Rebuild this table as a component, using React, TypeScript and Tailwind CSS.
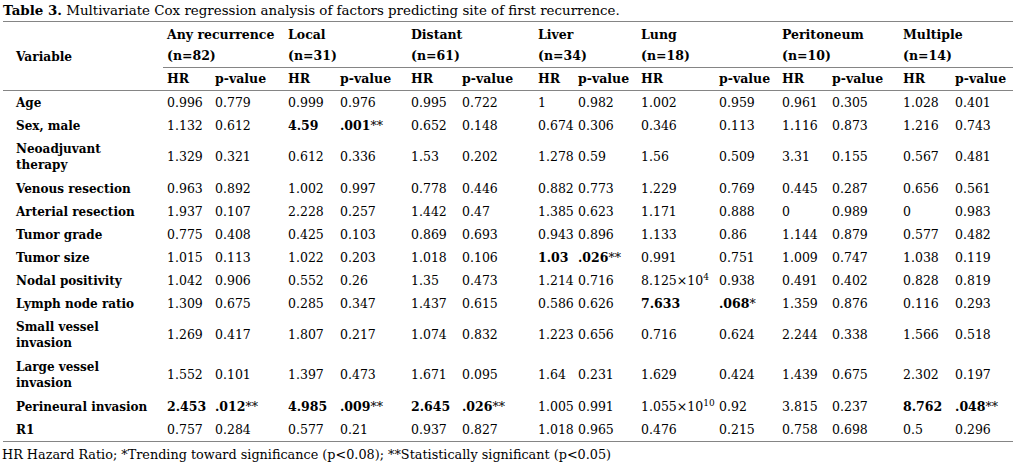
import React from "react";

type Cell = { v: React.ReactNode; b?: boolean };

const c = (v: React.ReactNode, b = false): Cell => ({ v, b });

const rows: { label: React.ReactNode; tall?: boolean; cells: Cell[] }[] = [
  { label: "Age", cells: ["0.996", "0.779", "0.999", "0.976", "0.995", "0.722", "1", "0.982", "1.002", "0.959", "0.961", "0.305", "1.028", "0.401"].map((x) => c(x)) },
  {
    label: "Sex, male",
    cells: [c("1.132"), c("0.612"), c("4.59", true), c(<><b>.001</b>**</>), c("0.652"), c("0.148"), c("0.674"), c("0.306"), c("0.346"), c("0.113"), c("1.116"), c("0.873"), c("1.216"), c("0.743")],
  },
  { label: <>Neoadjuvant<br />therapy</>, tall: true, cells: ["1.329", "0.321", "0.612", "0.336", "1.53", "0.202", "1.278", "0.59", "1.56", "0.509", "3.31", "0.155", "0.567", "0.481"].map((x) => c(x)) },
  { label: "Venous resection", cells: ["0.963", "0.892", "1.002", "0.997", "0.778", "0.446", "0.882", "0.773", "1.229", "0.769", "0.445", "0.287", "0.656", "0.561"].map((x) => c(x)) },
  { label: "Arterial resection", cells: ["1.937", "0.107", "2.228", "0.257", "1.442", "0.47", "1.385", "0.623", "1.171", "0.888", "0", "0.989", "0", "0.983"].map((x) => c(x)) },
  { label: "Tumor grade", cells: ["0.775", "0.408", "0.425", "0.103", "0.869", "0.693", "0.943", "0.896", "1.133", "0.86", "1.144", "0.879", "0.577", "0.482"].map((x) => c(x)) },
  {
    label: "Tumor size",
    cells: [c("1.015"), c("0.113"), c("1.022"), c("0.203"), c("1.018"), c("0.106"), c("1.03", true), c(<><b>.026</b>**</>), c("0.991"), c("0.751"), c("1.009"), c("0.747"), c("1.038"), c("0.119")],
  },
  {
    label: "Nodal positivity",
    cells: [c("1.042"), c("0.906"), c("0.552"), c("0.26"), c("1.35"), c("0.473"), c("1.214"), c("0.716"), c(<>8.125×10<sup className="text-[9px]">4</sup></>), c("0.938"), c("0.491"), c("0.402"), c("0.828"), c("0.819")],
  },
  {
    label: "Lymph node ratio",
    cells: [c("1.309"), c("0.675"), c("0.285"), c("0.347"), c("1.437"), c("0.615"), c("0.586"), c("0.626"), c("7.633", true), c(<><b>.068</b>*</>), c("1.359"), c("0.876"), c("0.116"), c("0.293")],
  },
  { label: <>Small vessel<br />invasion</>, tall: true, cells: ["1.269", "0.417", "1.807", "0.217", "1.074", "0.832", "1.223", "0.656", "0.716", "0.624", "2.244", "0.338", "1.566", "0.518"].map((x) => c(x)) },
  { label: <>Large vessel<br />invasion</>, tall: true, cells: ["1.552", "0.101", "1.397", "0.473", "1.671", "0.095", "1.64", "0.231", "1.629", "0.424", "1.439", "0.675", "2.302", "0.197"].map((x) => c(x)) },
  {
    label: "Perineural invasion",
    cells: [c("2.453", true), c(<><b>.012</b>**</>), c("4.985", true), c(<><b>.009</b>**</>), c("2.645", true), c(<><b>.026</b>**</>), c("1.005"), c("0.991"), c(<>1.055×10<sup className="text-[9px]">10</sup></>), c("0.92"), c("3.815"), c("0.237"), c("8.762", true), c(<><b>.048</b>**</>)],
  },
  { label: "R1", cells: ["0.757", "0.284", "0.577", "0.21", "0.937", "0.827", "1.018", "0.965", "0.476", "0.215", "0.758", "0.698", "0.5", "0.296"].map((x) => c(x)) },
];

const groups = [
  ["Any recurrence", "(n=82)"],
  ["Local", "(n=31)"],
  ["Distant", "(n=61)"],
  ["Liver", "(n=34)"],
  ["Lung", "(n=18)"],
  ["Peritoneum", "(n=10)"],
  ["Multiple", "(n=14)"],
];

const widths = [160, 48, 73, 52, 71, 51, 76, 40, 63, 78, 63, 50, 71, 52, 62];

export default function App() {
  return (
    <div className="w-[1035px] h-[471px] bg-white text-black text-[12.5px] leading-[16px] pt-[2px]" style={{ fontFamily: '"DejaVu Serif", serif' }}>
      {/* caption */}
      <p className="pl-[3px] text-[13.4px]">
        <b>Table 3.</b> Multivariate Cox regression analysis of factors predicting site of first recurrence.
      </p>

      <table className="ml-[3px] mt-[2px] w-[1010px] table-fixed border-collapse border-t border-[#858585]">
        <colgroup>
          {widths.map((w, i) => (
            <col key={i} style={{ width: w }} />
          ))}
        </colgroup>
        <thead className="font-bold">
          <tr>
            <th rowSpan={2} className="pl-[13px] pb-[3px] text-left align-bottom font-bold text-[12.2px]">Variable</th>
            {groups.map(([name]) => (
              <th key={name} colSpan={2} className="pl-1 pt-[5px] pb-[2px] text-left whitespace-nowrap">{name}</th>
            ))}
          </tr>
          <tr>
            {groups.map(([name, n]) => (
              <th key={name} colSpan={2} className="pl-1 py-[3px] text-left border-b border-[#858585]">{n}</th>
            ))}
          </tr>
          <tr className="border-b border-[#858585]">
            <th />
            {groups.map(([name]) => (
              <React.Fragment key={name}>
                <th className="pl-1 py-[3px] text-left">HR</th>
                <th className="pl-1 py-[3px] text-left whitespace-nowrap">p-value</th>
              </React.Fragment>
            ))}
          </tr>
        </thead>
        <tbody className="border-b border-[#858585]">
          {rows.map((r, i) => (
            <tr key={i}>
              <td className={`pl-[13px] font-bold whitespace-nowrap text-[12px] ${r.tall ? "py-[4px]" : "py-[3.5px]"}`}>{r.label}</td>
              {r.cells.map((cell, j) => (
                <td key={j} className={`pl-1 whitespace-nowrap ${cell.b ? "font-bold" : ""}`}>{cell.v}</td>
              ))}
            </tr>
          ))}
        </tbody>
      </table>

      {/* footnote */}
      <p className="pl-[2px] pt-[5px] text-[12.8px]">
        HR Hazard Ratio; *Trending toward significance (p&lt;0.08); **Statistically significant (p&lt;0.05)
      </p>
    </div>
  );
}
